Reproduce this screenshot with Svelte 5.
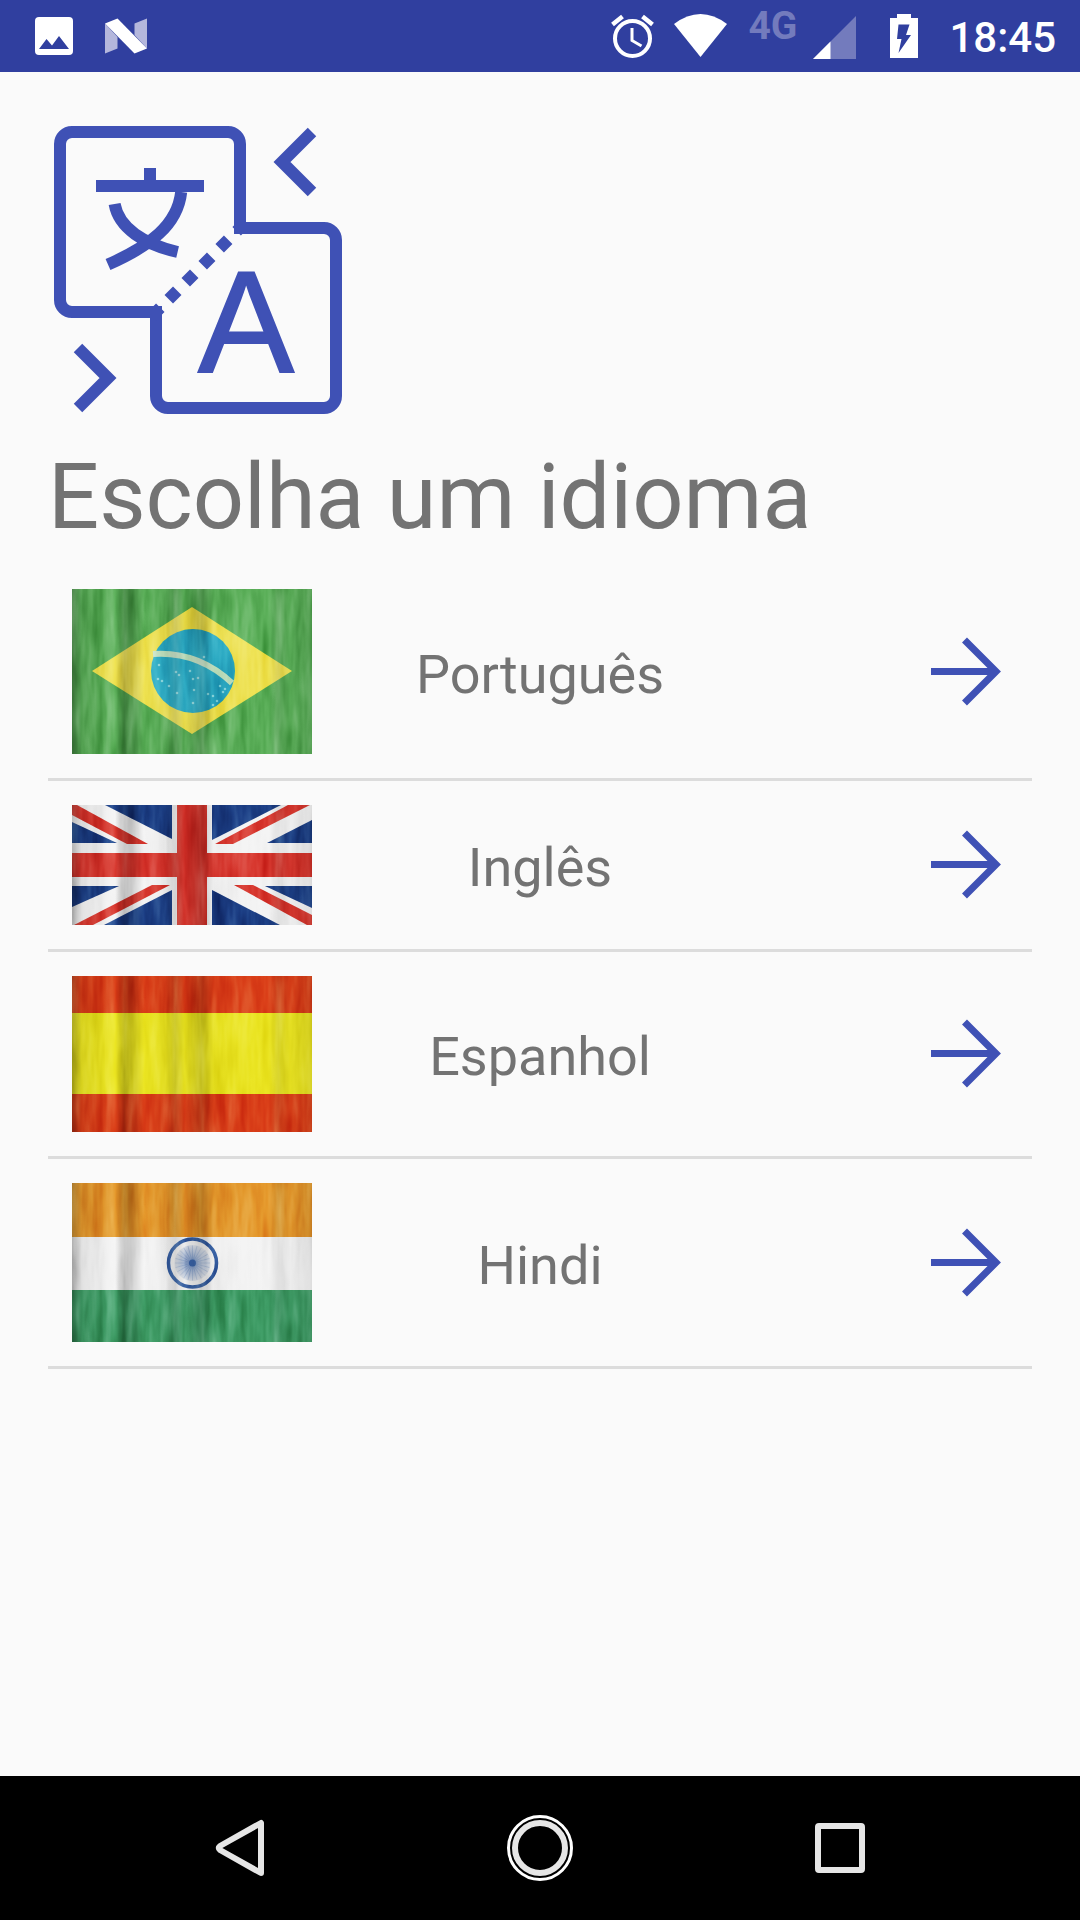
<script>
  const languages = [
    { name: 'Português', code: 'br', height: 165 },
    { name: 'Inglês', code: 'gb', height: 120 },
    { name: 'Espanhol', code: 'es', height: 156 },
    { name: 'Hindi', code: 'in', height: 159 }
  ];
  const spokes = Array.from({ length: 12 }, (_, i) => i * 15);
  const stars = [[86, 90], [90, 92], [97, 97], [104, 83], [105, 104], [107, 86], [118, 82], [121, 90], [126, 89], [122, 101], [121, 114], [136, 105], [141, 107], [145, 112], [148, 97], [151, 103], [153, 100], [141, 116], [132, 68], [87, 76]];
</script>

<div class="screen">
  <header class="status">
    <div class="notifications">
      <svg width="38" height="72" viewBox="35 0 38 72" aria-hidden="true">
        <rect x="35" y="17" width="38" height="38" rx="4" fill="#fff" />
        <path d="M39 49 46.500 39 52 45.500 59 36 69 49z" fill="#303f9f" />
      </svg>
      <svg width="42" height="72" viewBox="105 0 42 72" aria-hidden="true">
        <path d="M105 23.500 117.500 37v11.500L105 53.500zM147 18.500 134.500 23.500V35L147 48.500z" fill="#b4b7dc" />
        <path d="M105 23.500 117.500 18.500 147 48.500 134.500 53.500z" fill="#fff" />
      </svg>
    </div>
    <div class="system">
      <svg class="alarm" width="43" height="72" viewBox="611 0 43 72" fill="none" stroke="#fff" aria-hidden="true">
        <circle cx="632.500" cy="38.500" r="17.500" stroke-width="4" />
        <path d="M632 28v12.500L641.500 46" stroke-width="3" />
        <path d="M612.500 24.500 622.500 16.500M652.500 24.500 642.500 16.500" stroke-width="4.500" />
      </svg>
      <svg class="wifi" width="53" height="72" viewBox="674 0 53 72" aria-hidden="true">
        <path d="M674 24Q700.500 4 727 24L700.500 57z" fill="#fff" />
      </svg>
      <span class="network">4G</span>
      <svg class="signal" width="43" height="72" viewBox="813 0 43 72" aria-hidden="true">
        <path d="M813 59 856 16V59z" fill="#737bbd" />
        <path d="M813 59 830.500 41.500V59z" fill="#fff" />
      </svg>
      <svg class="battery" width="28" height="72" viewBox="890 0 28 72" aria-hidden="true">
        <path d="M890 18h7v-4h14v4h7v40h-28z" fill="#fff" />
        <path d="M898.500 24.500h11L906 35h5L898.500 53 901.500 39h-4.500z" fill="#303f9f" />
      </svg>
      <time class="clock" datetime="18:45">18:45</time>
    </div>
  </header>

  <main>
    <svg class="logo" width="300" height="300" viewBox="0 0 50 50" aria-hidden="true">
      <g fill="none" stroke="#3f51b5" stroke-width="2">
        <path d="M32 18V4a2 2 0 0 0-2-2H4a2 2 0 0 0-2 2v26a2 2 0 0 0 2 2h14v14a2 2 0 0 0 2 2h26a2 2 0 0 0 2-2V20a2 2 0 0 0-2-2z" />
        <path d="M17.300 32.700 32.700 17.300" stroke-dasharray="2" />
        <path d="M8 11h18M17 8v3M22.200 12C21.600 17.500 17 21 10 24.100M11.100 14C11.800 18 16 20.700 21.600 22" />
        <path d="M44 2 39 7l5 5M5 38 10 43l-5 5" />
      </g>
      <text x="33" y="42" text-anchor="middle">A</text>
    </svg>

    <h1>Escolha um idioma</h1>

    <ul>
      {#each languages as lang}
        <li>
          <button type="button">
            <svg class="flag" viewBox="0 0 240 {lang.height}" aria-hidden="true">
              <defs>
                <filter id="grain-{lang.code}" x="0" y="0" width="100%" height="100%" color-interpolation-filters="sRGB">
                  <feTurbulence type="fractalNoise" baseFrequency="0.09 0.014" numOctaves="3" seed="4" />
                  <feColorMatrix values=".8 0 0 0 .1  .8 0 0 0 .1  .8 0 0 0 .1  0 0 0 0 1" />
                </filter>
                <linearGradient id="bands-{lang.code}">
                  <stop offset="0" stop-opacity=".3" />
                  <stop offset=".04" stop-opacity=".08" />
                  <stop offset=".18" stop-opacity="0" />
                  <stop offset=".22" stop-opacity=".2" />
                  <stop offset=".27" stop-opacity=".1" />
                  <stop offset=".3" stop-opacity="0" />
                  <stop offset=".39" stop-opacity=".04" />
                  <stop offset=".43" stop-opacity=".16" />
                  <stop offset=".47" stop-opacity=".02" />
                  <stop offset=".54" stop-opacity=".18" />
                  <stop offset=".59" stop-opacity=".02" />
                  <stop offset=".82" stop-opacity="0" />
                  <stop offset=".86" stop-opacity=".1" />
                  <stop offset=".91" stop-opacity=".03" />
                  <stop offset="1" stop-opacity=".1" />
                </linearGradient>
                <radialGradient id="wheel">
                  <stop offset="0" stop-color="#3a64a8" stop-opacity=".65" />
                  <stop offset="1" stop-color="#3a64a8" stop-opacity=".1" />
                </radialGradient>
              </defs>

              {#if lang.code === 'br'}
                <rect width="240" height="165" fill="#5cb05a" />
                <path d="M20 82 120 18 220 82 120 145z" fill="#efe353" />
                <circle cx="121" cy="82" r="42" fill="#2eaec7" />
                <path d="M81 65Q126 62 160 94" fill="none" stroke="#c5e3c4" stroke-width="6" />
                {#each stars as [x, y]}
                  <circle cx={x} cy={y} r="1.300" fill="#8ed9e0" />
                {/each}
              {:else if lang.code === 'gb'}
                <rect width="240" height="120" fill="#f4f4f4" />
                <path d="M33 0H100V34zM0 17V38H45zM140 0H209L140 35zM240 15V38H195zM0 81H47L0 102zM100 85V120H32zM193 81H240V103zM140 85V120H208z" fill="#1c3f86" />
                <path d="M0 0H5L76 39H55L0 10zM143 39H161L238 0H216zM80 80H98L21 120H2zM162 80H181L240 110V120H235zM105 0H135V48H240V72H135V120H105V72H0V48H105z" fill="#d8372e" />
              {:else if lang.code === 'es'}
                <rect width="240" height="156" fill="#db4019" />
                <rect y="37" width="240" height="81" fill="#ebe522" />
              {:else}
                <rect width="240" height="159" fill="#3f9d66" />
                <rect width="240" height="107" fill="#f4f4f4" />
                <rect width="240" height="54" fill="#e5992c" />
                <g fill="none" stroke="#3a64a8">
                  <circle cx="120.500" cy="80" r="24" stroke-width="3.500" />
                  {#each spokes as angle}
                    <path d="M103 80H138" stroke-width=".6" opacity=".3" transform="rotate({angle} 120.500 80)" />
                  {/each}
                </g>
                <circle cx="120.500" cy="80" r="18" fill="url(#wheel)" />
                <circle cx="120.500" cy="80" r="3.500" fill="#3a64a8" />
              {/if}
              <rect width="240" height={lang.height} fill="url(#bands-{lang.code})" />
              <rect class="grain" width="240" height={lang.height} filter="url(#grain-{lang.code})" />
            </svg>
            <span class="label">{lang.name}</span>
            <svg class="arrow" width="84" height="72" viewBox="0 0 84 72" fill="none" stroke="#3f51b5" stroke-width="7" aria-hidden="true">
              <path d="M7 35.500H71M40.500 4 72 35.500 40.500 67" />
            </svg>
          </button>
        </li>
      {/each}
    </ul>
  </main>

  <nav>
    <button type="button" aria-label="Voltar">
      <svg width="72" height="72" viewBox="-36 -36 72 72" fill="none" stroke="#e6e6e6" stroke-width="6" stroke-linejoin="round" aria-hidden="true">
        <path d="M21-25V25L-20 2Q-22.500 0-20-2z" />
      </svg>
    </button>
    <button type="button" aria-label="Início">
      <svg width="72" height="72" viewBox="-36 -36 72 72" fill="none" aria-hidden="true">
        <circle r="31.500" stroke="#fff" stroke-width="3" />
        <circle r="25" stroke="#e6e6e6" stroke-width="6" />
      </svg>
    </button>
    <button type="button" aria-label="Recentes">
      <svg width="72" height="72" viewBox="-36 -36 72 72" fill="none" stroke="#e6e6e6" stroke-width="6" aria-hidden="true">
        <rect x="-22" y="-22" width="44" height="44" rx="1" />
      </svg>
    </button>
  </nav>
</div>

<style>
  :global(body) {
    margin: 0;
    background: #fafafa;
  }
  .screen {
    display: flex;
    flex-direction: column;
    min-height: 100vh;
    font-family: Roboto, sans-serif;
    color: #737373;
    background: #fafafa;
  }
  svg {
    display: block;
    flex: none;
  }
  .status {
    display: flex;
    justify-content: space-between;
    height: 72px;
    padding: 0 24px 0 35px;
    background: #303f9f;
    color: #fff;
  }
  .notifications {
    display: flex;
    gap: 32px;
  }
  .system {
    display: flex;
  }
  .wifi {
    margin-left: 20px;
  }
  .network {
    margin-left: 21px;
    font-size: 39px;
    font-weight: 700;
    line-height: 52px;
    color: #737bbd;
  }
  .signal {
    margin-left: 16px;
  }
  .battery {
    margin-left: 34px;
  }
  .clock {
    margin-left: 31px;
    font-size: 42px;
    font-weight: 500;
    line-height: 76px;
  }
  main {
    flex: 1;
    padding: 48px 48px 0;
  }
  .logo text {
    font-family: "Liberation Sans", sans-serif;
    font-size: 24px;
    fill: #3f51b5;
    stroke: #3f51b5;
    stroke-width: 0.3px;
  }
  h1 {
    margin: 18px 0 7px;
    font-size: 90px;
    font-weight: 400;
    line-height: 120px;
  }
  ul {
    margin: 0;
    padding: 0;
    list-style: none;
  }
  li {
    border-bottom: 3px solid #dcdcdc;
  }
  button {
    border: 0;
    background: none;
    color: inherit;
    font: inherit;
    cursor: pointer;
  }
  li button {
    display: grid;
    grid-template-columns: 240px 1fr 240px;
    align-items: center;
    width: 100%;
    padding: 24px;
  }
  .flag {
    width: 100%;
    isolation: isolate;
  }
  .grain {
    mix-blend-mode: soft-light;
  }
  .label {
    padding-top: 6px;
    font-size: 54px;
    line-height: 64px;
    text-align: center;
  }
  .arrow {
    justify-self: end;
  }
  nav {
    display: grid;
    grid-template-columns: repeat(3, 1fr);
    height: 144px;
    padding: 0 90px;
    background: #000;
  }
  nav button {
    display: flex;
    align-items: center;
    justify-content: center;
    padding: 0;
  }
</style>
